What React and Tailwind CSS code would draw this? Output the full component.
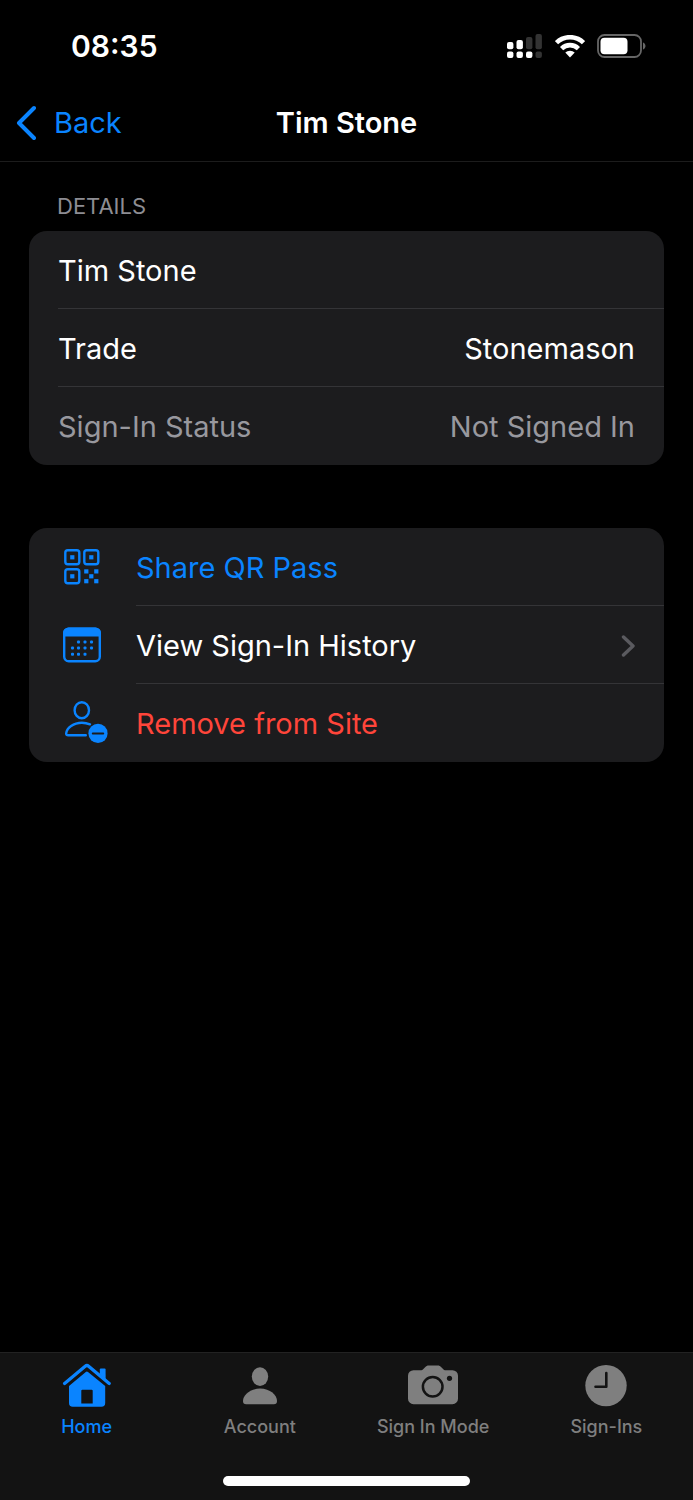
const SignalIcon = () => (
  <svg className="w-9 h-6" viewBox="0 0 36 24" fill="#fff" aria-hidden="true">
    <rect x="0" y="8" width="6.4" height="7.2" rx="2" />
    <rect x="9.5" y="6" width="6.4" height="9.2" rx="2" />
    <rect x="19" y="3" width="6.4" height="12.2" rx="2" fill="#333" />
    <rect x="28.5" y="0" width="6.4" height="15.2" rx="2" fill="#333" />
    <rect x="0" y="17.5" width="6.4" height="6.5" rx="2" />
    <rect x="9.5" y="17.5" width="6.4" height="6.5" rx="2" />
    <rect x="19" y="17.5" width="6.4" height="6.5" rx="2" />
    <rect x="28.5" y="17.5" width="6.4" height="6.5" rx="2" fill="#333" />
  </svg>
);

const WifiIcon = () => (
  <svg className="w-[30px] h-[23px]" viewBox="0 0 30 23" fill="none" stroke="#fff" strokeWidth="4.6" aria-hidden="true">
    <path d="M1.5 7.7a19.3 19.3 0 0 1 27 0" />
    <path d="M6.6 13.6a12 12 0 0 1 16.8 0" />
    <path d="M10.3 17.6a6.8 6.8 0 0 1 9.4 0L15 22.5z" fill="#fff" stroke="none" />
  </svg>
);

const BatteryIcon = () => (
  <svg className="w-[50px] h-6" viewBox="0 0 50 24" fill="none" aria-hidden="true">
    <rect x="1" y="1" width="43" height="22" rx="6.5" stroke="#666" strokeWidth="1.8" />
    <rect x="3.5" y="3.8" width="27" height="16.4" rx="4" fill="#fff" />
    <path d="M46 8.5c3.3 1.2 3.3 5.8 0 7z" fill="#666" />
  </svg>
);

const QrIcon = () => (
  <svg className="w-9 h-9" viewBox="0 0 36 36" fill="none" stroke="#0a84ff" strokeWidth="2.4" aria-hidden="true">
    <rect x="1.3" y="1.3" width="14" height="14" rx="2.5" />
    <rect x="20.3" y="1.3" width="14" height="14" rx="2.5" />
    <rect x="1.3" y="20.3" width="14" height="14" rx="2.5" />
    <g fill="#0a84ff" stroke="none">
      <rect x="6.2" y="6.2" width="4.2" height="4.2" />
      <rect x="25.2" y="6.2" width="4.2" height="4.2" />
      <rect x="6.2" y="25.2" width="4.2" height="4.2" />
      <rect x="20.2" y="20.3" width="4.2" height="4.2" />
      <rect x="30.2" y="20.3" width="4.2" height="4.2" />
      <rect x="25.2" y="25.2" width="4.2" height="4.2" />
      <rect x="20.2" y="30.1" width="4.2" height="4.2" />
      <rect x="30.2" y="30.1" width="4.2" height="4.2" />
    </g>
  </svg>
);

const CalendarIcon = () => (
  <svg className="w-[38px] h-9" viewBox="0 0 38 36" fill="#0a84ff" aria-hidden="true">
    <rect x="1.2" y="1.7" width="35.6" height="32.6" rx="4.5" fill="none" stroke="#0a84ff" strokeWidth="2.4" />
    <path d="M0 9.5V6a5.5 5.5 0 0 1 5.5-5.5h27A5.5 5.5 0 0 1 38 6v3.5z" />
    {[15.5, 22, 28.5].map((x) => (
      <rect key={x} x={x - 1.5} y="13.5" width="3" height="3" rx="1" />
    ))}
    {[9.5, 15.5, 22, 28.5].map((x) => (
      <rect key={x} x={x - 1.5} y="19.5" width="3" height="3" rx="1" />
    ))}
    {[9.5, 15.5, 22].map((x) => (
      <rect key={x} x={x - 1.5} y="25.8" width="3" height="3" rx="1" />
    ))}
  </svg>
);

const PersonMinusIcon = () => (
  <svg className="w-11 h-11" viewBox="0 0 44 44" fill="none" stroke="#0a84ff" strokeWidth="2.4" strokeLinecap="round" aria-hidden="true">
    <ellipse cx="17.8" cy="9.2" rx="7.2" ry="8" />
    <path d="M26 23.3c-2.4-1-5.1-1.6-8.1-1.6-8.4 0-15.2 5.2-15.7 10.7-.1 1.3.6 1.9 2 1.9h17.600" />
    <circle cx="34" cy="32.4" r="9.6" fill="#0a84ff" stroke="none" />
    <path d="M28.8 32.4h10.4" stroke="#1c1c1e" strokeWidth="2" />
  </svg>
);

const HomeIcon = () => (
  <svg className="w-[50px] h-[44px]" viewBox="0 0 50 44" fill="#0a84ff" aria-hidden="true">
    <path d="M2.6 20.4 23.2 3.3a2.6 2.6 0 0 1 3.4 0L47.2 20.4" fill="none" stroke="#0a84ff" strokeWidth="3.3" strokeLinecap="round" />
    <path d="M37.8 6.6a1 1 0 0 1 1-1h3.8a1 1 0 0 1 1 1v9.6l-5.8-4.9z" />
    <path d="M7 23 23.8 9a1.7 1.7 0 0 1 2.2 0l17.2 14V40a3.8 3.8 0 0 1-3.8 3.8H10.8A3.8 3.8 0 0 1 7 40zM20.3 26.8a1 1 0 0 0-1 1V40.5h11.4V27.8a1 1 0 0 0-1-1z" fillRule="evenodd" />
  </svg>
);

const AccountIcon = () => (
  <svg className="w-9 h-[44px]" viewBox="0 0 36 44" fill="#7f7f7f" aria-hidden="true">
    <ellipse cx="18" cy="13.6" rx="8.2" ry="9.3" />
    <path d="M1 37.9C1 32.4 7.7 25.6 18 25.6S35 32.4 35 37.9c0 2.2-1 3.3-3.2 3.3H4.2C2 41.2 1 40.1 1 37.9z" />
  </svg>
);

const CameraIcon = () => (
  <svg className="w-[50px] h-[44px]" viewBox="0 0 50 44" fill="#7f7f7f" aria-hidden="true">
    <path d="M5.5 7.2h7.3c1 0 1.6-.3 2.3-1l2-2c1.1-1.1 2-1.7 3.7-1.7h8.8c1.7 0 2.6.6 3.7 1.7l2 2c.7.7 1.3 1 2.3 1h6.9A5.500 5.500 0 0 1 50 12.7v23a5.500 5.500 0 0 1-5.500 5.500h-39A5.500 5.500 0 0 1 0 35.7v-23a5.500 5.500 0 0 1 5.500-5.500z" />
    <circle cx="24.7" cy="23.8" r="9.8" stroke="#131313" strokeWidth="2.5" />
    <circle cx="41.5" cy="15.3" r="2.6" fill="#131313" />
  </svg>
);

const ClockIcon = () => (
  <svg className="w-[42px] h-[44px]" viewBox="0 0 42 44" fill="#7f7f7f" aria-hidden="true">
    <circle cx="21" cy="22.6" r="20.7" />
    <path d="M21.3 10v13.7H10.5" fill="none" stroke="#131313" strokeWidth="2.6" strokeLinecap="round" strokeLinejoin="round" />
  </svg>
);

const details = [
  { label: "Tim Stone" },
  { label: "Trade", value: "Stonemason" },
  { label: "Sign-In Status", value: "Not Signed In", muted: true },
];

const actions = [
  { label: "Share QR Pass", Icon: QrIcon, iconBox: "pl-[35px]", color: "text-[#0a84ff]" },
  { label: "View Sign-In History", Icon: CalendarIcon, iconBox: "pl-[34px]", color: "text-white", chevron: true },
  { label: "Remove from Site", Icon: PersonMinusIcon, iconBox: "pl-[35px]", color: "text-[#ff453a]" },
];

const tabs = [
  { label: "Home", Icon: HomeIcon, active: true },
  { label: "Account", Icon: AccountIcon },
  { label: "Sign In Mode", Icon: CameraIcon },
  { label: "Sign-Ins", Icon: ClockIcon },
];

const StatusBar = () => (
  <div className="flex items-center justify-between h-[92px] pl-[71px] pr-[46px] text-white">
    <span className="text-[30px] font-semibold">08:35</span>
    <div className="flex items-center gap-3">
      <SignalIcon />
      <WifiIcon />
      <BatteryIcon />
    </div>
  </div>
);

const NavBar = () => (
  <header className="grid grid-cols-[1fr_auto_1fr] items-center h-[70px] pb-2 px-4 border-b border-[#1c1c1c]">
    <button className="flex items-center gap-[18px] text-[#0a84ff] text-[29px]">
      <svg className="w-5 h-9" viewBox="0 0 20 36" fill="none" stroke="currentColor" strokeWidth="4" strokeLinecap="round" strokeLinejoin="round" aria-hidden="true">
        <path d="M18 3 3 18l15 15" />
      </svg>
      Back
    </button>
    <h1 className="text-white text-[29px] font-semibold">Tim Stone</h1>
  </header>
);

const App = () => {
  return (
    <div className="min-h-screen flex flex-col bg-black font-['Inter',sans-serif]">
      <StatusBar />
      <NavBar />

      <main className="flex-1 px-[29px] text-[29px]">
        {/* Details */}
        <section>
          <h2 className="pt-7 pb-[9px] pl-7 text-[22px] leading-8 text-[#8d8d93]">DETAILS</h2>
          <dl className="rounded-[18px] bg-[#1c1c1e] pl-[29px] overflow-hidden">
            {details.map(({ label, value, muted }, i) => (
              <div
                key={label}
                className={`flex items-center justify-between h-[78px] pt-[2px] pr-[29px] ${i < details.length - 1 ? "border-b border-[#343437]" : ""} ${muted ? "text-[#98989e]" : "text-white"}`}
              >
                <dt>{label}</dt>
                {value && <dd>{value}</dd>}
              </div>
            ))}
          </dl>
        </section>

        {/* Actions */}
        <section className="mt-[63px] rounded-[18px] bg-[#1c1c1e] overflow-hidden">
          {actions.map(({ label, Icon, iconBox, color, chevron }, i) => (
            <button key={label} className="flex items-center w-full text-left">
              <span className={`w-[107px] shrink-0 ${iconBox}`}>
                <Icon />
              </span>
              <span className={`flex flex-1 items-center justify-between h-[78px] pt-[2px] pr-[29px] ${i < actions.length - 1 ? "border-b border-[#343437]" : ""} ${color}`}>
                {label}
                {chevron && (
                  <svg className="w-[14px] h-6" viewBox="0 0 14 24" fill="none" stroke="#5a5a5f" strokeWidth="3.4" strokeLinecap="round" strokeLinejoin="round" aria-hidden="true">
                    <path d="M2.5 3 12 12l-9.5 9" />
                  </svg>
                )}
              </span>
            </button>
          ))}
        </section>
      </main>

      {/* Tab bar */}
      <footer className="border-t border-[#222] bg-[#131313] pt-[10px] pb-[14px]">
        <nav className="grid grid-cols-4">
          {tabs.map(({ label, Icon, active }) => (
            <a
              key={label}
              href="#"
              className={`flex flex-col items-center gap-2 text-[18px] leading-6 font-medium ${active ? "text-[#0a84ff]" : "text-[#7f7f7f]"}`}
            >
              <Icon />
              {label}
            </a>
          ))}
        </nav>
        <div className="mx-auto mt-[37px] w-[247px] h-[10px] rounded-full bg-white" />
      </footer>
    </div>
  );
};

export default App;
